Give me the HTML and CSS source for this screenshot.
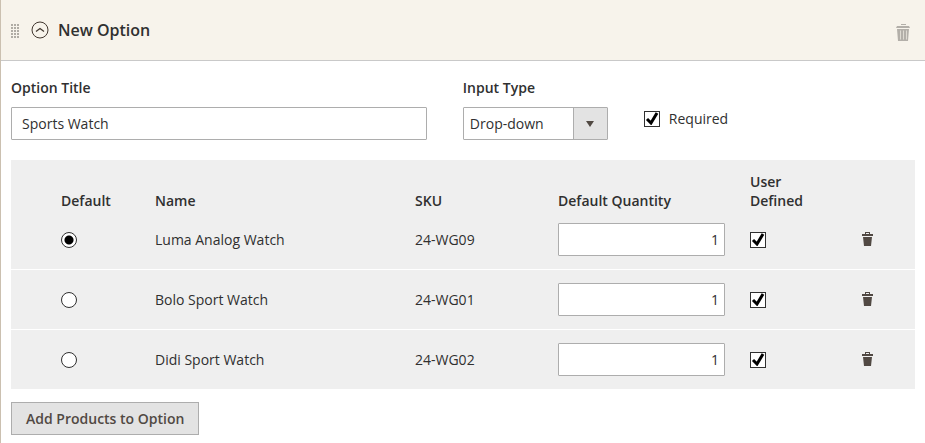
FILE: index.html
```html
<!DOCTYPE html>
<html lang="en">
<head>
<meta charset="utf-8">
<title>New Option</title>
<link rel="stylesheet" href="styles.css">
</head>
<body>
<svg class="sprite" aria-hidden="true">
  <symbol id="trash" viewBox="0 0 11 14">
    <path d="M3 2V0h5v2h3v2H0V2zM4 1v1h3V1zM1 5h9l-1 9H2z" fill-rule="evenodd"/>
  </symbol>
  <symbol id="tick" viewBox="0 0 14 14">
    <path d="M2 8l4 4 6-10" fill="none" stroke="#000" stroke-width="3"/>
  </symbol>
</svg>
<section class="option">
  <header class="option-header">
    <svg class="grip" viewBox="0 0 8 14" aria-hidden="true">
      <path d="M1 0V14M4 0V14M7 0V14" stroke="#b0aca5" stroke-width="2" stroke-dasharray="2 1" fill="none"/>
    </svg>
    <button class="icon-button" type="button" aria-label="Collapse">
      <svg class="collapse" viewBox="0 0 18 18"><circle cx="9" cy="9" r="8" fill="none" stroke="#41362f" stroke-width="1"/><path d="M5 10.5l4-3 4 3" fill="none" stroke="#41362f" stroke-width="1.2"/></svg>
    </button>
    <h2 class="option-name">New Option</h2>
    <button class="icon-button" type="button" aria-label="Delete option">
      <svg class="remove" viewBox="0 0 14 17"><path d="M5 0h5v1H5zM1 2h12l1 2H0zM1 5h12l-1 12H2z" fill="#b3afa9"/><path d="M4.500 6.500v9M7.500 6.500v9M10.500 6.500v9" stroke="#dedad2" fill="none"/></svg>
    </button>
  </header>
  <div class="option-body">
    <div class="fields">
      <div class="field field-title">
        <label class="label" for="title">Option Title</label>
        <input class="text-input" id="title" type="text" value="Sports Watch">
      </div>
      <div class="field field-type">
        <label class="label" for="type">Input Type</label>
        <div class="select-wrap">
          <select class="select" id="type"><option>Drop-down</option></select>
          <span class="select-arrow"><svg class="arrow" viewBox="0 0 8 6" aria-hidden="true"><path d="M0 0h8L4 6z" fill="#514943"/></svg></span>
        </div>
      </div>
      <label class="required">
        <span class="check"><input class="box" type="checkbox" checked><svg class="tick"><use href="#tick"/></svg></span>
        Required
      </label>
    </div>
    <table class="products">
      <colgroup><col class="col-default"><col><col class="col-sku"><col class="col-qty"><col class="col-user"><col class="col-action"></colgroup>
      <thead>
        <tr><th>Default</th><th>Name</th><th>SKU</th><th>Default Quantity</th><th class="user">User Defined</th><td></td></tr>
      </thead>
      <tbody>
        <tr>
          <td><input class="radio" type="radio" name="default" aria-label="Default: Luma Analog Watch" checked></td>
          <td>Luma Analog Watch</td><td>24-WG09</td>
          <td class="qty"><input class="text-input number" type="text" value="1" aria-label="Default quantity"></td>
          <td><span class="check"><input class="box" type="checkbox" aria-label="User defined" checked><svg class="tick"><use href="#tick"/></svg></span></td>
          <td><button class="icon-button" type="button" aria-label="Remove"><svg class="trash"><use href="#trash"/></svg></button></td>
        </tr>
        <tr>
          <td><input class="radio" type="radio" name="default" aria-label="Default: Bolo Sport Watch"></td>
          <td>Bolo Sport Watch</td><td>24-WG01</td>
          <td class="qty"><input class="text-input number" type="text" value="1" aria-label="Default quantity"></td>
          <td><span class="check"><input class="box" type="checkbox" aria-label="User defined" checked><svg class="tick"><use href="#tick"/></svg></span></td>
          <td><button class="icon-button" type="button" aria-label="Remove"><svg class="trash"><use href="#trash"/></svg></button></td>
        </tr>
        <tr>
          <td><input class="radio" type="radio" name="default" aria-label="Default: Didi Sport Watch"></td>
          <td>Didi Sport Watch</td><td>24-WG02</td>
          <td class="qty"><input class="text-input number" type="text" value="1" aria-label="Default quantity"></td>
          <td><span class="check"><input class="box" type="checkbox" aria-label="User defined" checked><svg class="tick"><use href="#tick"/></svg></span></td>
          <td><button class="icon-button" type="button" aria-label="Remove"><svg class="trash"><use href="#trash"/></svg></button></td>
        </tr>
      </tbody>
    </table>
    <button class="add" type="button">Add Products to Option</button>
  </div>
</section>
</body>
</html>
```
FILE: styles.css
```css
* { box-sizing: border-box; }
body {
  margin: 0;
  background: #fff;
  color: #303030;
  font: 14px/19px "Open Sans", sans-serif;
}
input, select, button { font: inherit; margin: 0; }
svg { display: block; }
.sprite { position: absolute; width: 0; height: 0; }
.option { border-left: 1px solid #cbc0b0; min-height: 100vh; }
.option-header {
  display: flex;
  align-items: center;
  height: 61px;
  padding: 0 15px 0 10px;
  background: #f7f3eb;
  border-bottom: 1px solid #c9c9c9;
}
.grip { width: 8px; height: 14px; margin: 2px 12px 0 0; }
.icon-button { display: block; padding: 0; border: 0; background: none; }
.collapse { width: 18px; height: 18px; }
.option-name { flex: 1; margin: 0 0 0 9px; font-size: 16px; line-height: 22px; font-weight: 600; }
.remove { width: 14px; height: 17px; margin-top: 4px; }
.option-body { padding: 17px 10px 8px; }
.fields { display: flex; gap: 36px; margin-bottom: 20px; }
.field { display: flex; flex-direction: column; gap: 10px; }
.field-title { width: 46%; }
.field-type { width: 145px; }
.label { font-weight: 600; }
.text-input {
  display: block;
  width: 100%;
  height: 33px;
  padding: 0 10px;
  color: #303030;
  background: #fff;
  border: 1px solid #adadad;
  border-radius: 1px;
}
.number { padding: 0 5px; text-align: right; }
.select-wrap { position: relative; }
.select {
  display: block;
  width: 100%;
  height: 33px;
  padding: 0 40px 0 6px;
  appearance: none;
  color: #303030;
  background: #fff;
  border: 1px solid #adadad;
  border-radius: 1px;
}
.select-arrow {
  position: absolute;
  top: 1px;
  right: 1px;
  bottom: 1px;
  display: grid;
  place-items: center;
  width: 34px;
  background: #e3e3e3;
  border-left: 1px solid #adadad;
  pointer-events: none;
}
.arrow { width: 8px; height: 6px; }
.required { display: flex; align-items: center; align-self: center; gap: 9px; margin-top: 18px; }
.check { position: relative; display: block; width: 16px; height: 16px; margin-top: 2px; }
.box {
  display: block;
  width: 16px;
  height: 16px;
  appearance: none;
  background: #fff;
  border: 1px solid #303030;
}
.tick { position: absolute; top: 0; left: 1px; width: 14px; height: 14px; pointer-events: none; visibility: hidden; }
.box:checked + .tick { visibility: visible; }
.products { width: 100%; table-layout: fixed; border-collapse: collapse; background: #efefef; }
.products th, .products td { padding: 0; text-align: left; }
.products th { height: 50px; padding-top: 12px; font-weight: 600; vertical-align: bottom; }
.products td { height: 60px; vertical-align: middle; }
.products thead td { height: 50px; }
.products tbody tr:first-child td { height: 59px; }
.products tr > :first-child { padding-left: 50px; }
.products tbody tr + tr td { border-top: 1px solid #fff; }
.products .qty { padding-right: 25px; }
.products .user { padding-right: 40px; }
.col-default { width: 144px; }
.col-sku { width: 143px; }
.col-qty { width: 192px; }
.col-user { width: 112px; }
.col-action { width: 53px; }
.radio {
  display: block;
  width: 16px;
  height: 16px;
  margin-top: 2px;
  appearance: none;
  background: #fff;
  border: 1px solid #303030;
  border-radius: 50%;
}
.radio:checked { background: radial-gradient(circle, #000 4px, #fff 5px); }
.trash { width: 11px; height: 14px; fill: #514943; }
.add {
  display: block;
  height: 33px;
  margin-top: 13px;
  padding: 0 14px;
  color: #514943;
  font-weight: 600;
  background: #e3e3e3;
  border: 1px solid #adadad;
}
```
